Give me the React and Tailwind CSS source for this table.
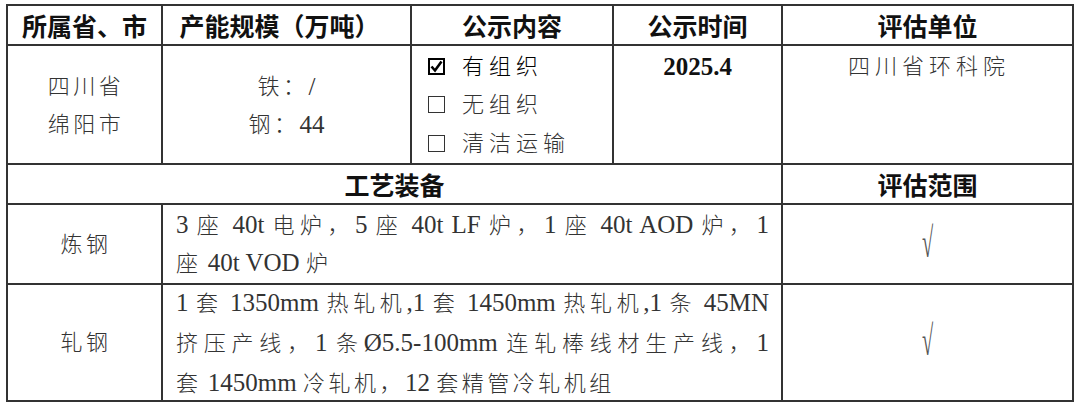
import React from 'react';

const CJK = /([\u3000-\u303f\u4e00-\u9fff\uff00-\uffef]+)/;

// CJK runs get the Word-grid spacing, latin runs stay in Times-width serif
function Mixed({ text, wide }) {
  return text.split(CJK).filter(Boolean).map((part, i) =>
    CJK.test(part) ? (
      <span key={i} className={`text-[22px] font-light ${wide ? 'tracking-[5px]' : 'tracking-[3.5px]'}`}>{part}</span>
    ) : (
      <span key={i} className="text-[25px]">{part}</span>
    )
  );
}

function Box({ checked }) {
  return (
    <span className={`inline-flex items-center justify-center w-[17px] h-[17px] mr-[17px] ${checked ? 'border-2 border-black' : 'border-[1.5px] border-[#333]'}`}>
      {checked && (
        <svg width="13" height="13" viewBox="0 0 13 13">
          <path d="M1.5 6.5 L5 10.5 L11.5 1.5" fill="none" stroke="#000" strokeWidth="2.6" />
        </svg>
      )}
    </span>
  );
}

function Tick() {
  return <span className="inline-block text-[24px] leading-none scale-x-[0.85] scale-y-[1.75] text-[#555]">√</span>;
}

const th = "border-2 border-[#333] p-0 text-center text-[25px] font-bold text-[#111] leading-none";
const td = "border-2 border-[#333] p-0";
const line = "flex items-center whitespace-nowrap";

export default function App() {
  return (
    <div className="w-[1080px] h-[408px] bg-white overflow-hidden pt-[4px] pl-[6px] font-['Liberation_Serif','Noto_Sans_CJK_SC',serif] text-[#333]">
      <table className="table-fixed border-collapse w-[1066px]">
        <colgroup>
          <col className="w-[155px]" />
          <col className="w-[249px]" />
          <col className="w-[202px]" />
          <col className="w-[169px]" />
          <col className="w-[291px]" />
        </colgroup>
        <tbody>
          <tr className="h-[40px] font-['Noto_Sans_CJK_SC',sans-serif]">
            <th className={th}>所属省、市</th>
            <th className={`${th} pr-[14px]`}>产能规模（万吨）</th>
            <th className={th}>公示内容</th>
            <th className={th}>公示时间</th>
            <th className={th}>评估单位</th>
          </tr>
          <tr className="h-[119px]">
            <td className={`${td} align-middle pl-[3px]`}>
              <div className="flex flex-col items-center pt-[2px]">
                <div className={`${line} h-[38px]`}><Mixed text="四川省" /></div>
                <div className={`${line} h-[38px]`}><Mixed text="绵阳市" /></div>
              </div>
            </td>
            <td className={`${td} align-middle`}>
              <div className="flex flex-col items-center pt-[2px]">
                <div className={`${line} h-[38px]`}><Mixed text="铁：/" /></div>
                <div className={`${line} h-[38px]`}><Mixed text="钢：44" /></div>
              </div>
            </td>
            <td className={`${td} align-top pl-[16px] pt-[1px]`}>
              <div className={`${line} h-[38.5px] text-black`}><Box checked /><Mixed text="有组织" wide /></div>
              <div className={`${line} h-[38.5px]`}><Box /><Mixed text="无组织" wide /></div>
              <div className={`${line} h-[38.5px]`}><Box /><Mixed text="清洁运输" wide /></div>
            </td>
            <td className={`${td} align-top text-center pt-[2px] leading-[38px] text-[25px] font-bold text-[#111]`}>
              2025.4
            </td>
            <td className={`${td} align-top pl-[3px] pt-[1px]`}>
              <div className={`${line} h-[38px] justify-center`}><Mixed text="四川省环科院" wide /></div>
            </td>
          </tr>
          <tr className="h-[40px] font-['Noto_Sans_CJK_SC',sans-serif]">
            <th colSpan={4} className={th}>工艺装备</th>
            <th className={th}>评估范围</th>
          </tr>
          <tr className="h-[80px]">
            <td className={`${td} align-middle pl-[3px]`}>
              <div className={`${line} h-[38px] justify-center text-[#333]`}><Mixed text="炼钢" /></div>
            </td>
            <td colSpan={3} className={`${td} align-middle pl-[13px] pr-[12px]`}>
              <div className="h-[76px] flex flex-col justify-center">
                <div className="h-[38px] leading-[38px] text-justify [text-align-last:justify]"><Mixed text="3 座 40t 电炉，5 座 40t LF 炉，1 座 40t AOD 炉，1" /></div>
                <div className="h-[38px] leading-[38px]"><Mixed text="座 40t VOD 炉" /></div>
              </div>
            </td>
            <td className={`${td} text-center align-middle`}><Tick /></td>
          </tr>
          <tr className="h-[117px]">
            <td className={`${td} align-middle pl-[3px]`}>
              <div className={`${line} h-[38px] justify-center`}><Mixed text="轧钢" /></div>
            </td>
            <td colSpan={3} className={`${td} align-middle pl-[13px] pr-[12px]`}>
              <div className="h-[113px] flex flex-col justify-center">
                <div className="h-[40px] shrink-0 leading-[40px] text-justify [text-align-last:justify]"><Mixed text="1 套 1350mm 热轧机,1 套 1450mm 热轧机,1 条 45MN" /></div>
                <div className="h-[40px] shrink-0 leading-[40px] text-justify [text-align-last:justify]"><Mixed text="挤压产线，1 条Ø5.5-100mm 连轧棒线材生产线，1" /></div>
                <div className="h-[40px] shrink-0 leading-[40px]"><Mixed text="套 1450mm 冷轧机，12 套精管冷轧机组" /></div>
              </div>
            </td>
            <td className={`${td} text-center align-middle`}><Tick /></td>
          </tr>
        </tbody>
      </table>
    </div>
  );
}
